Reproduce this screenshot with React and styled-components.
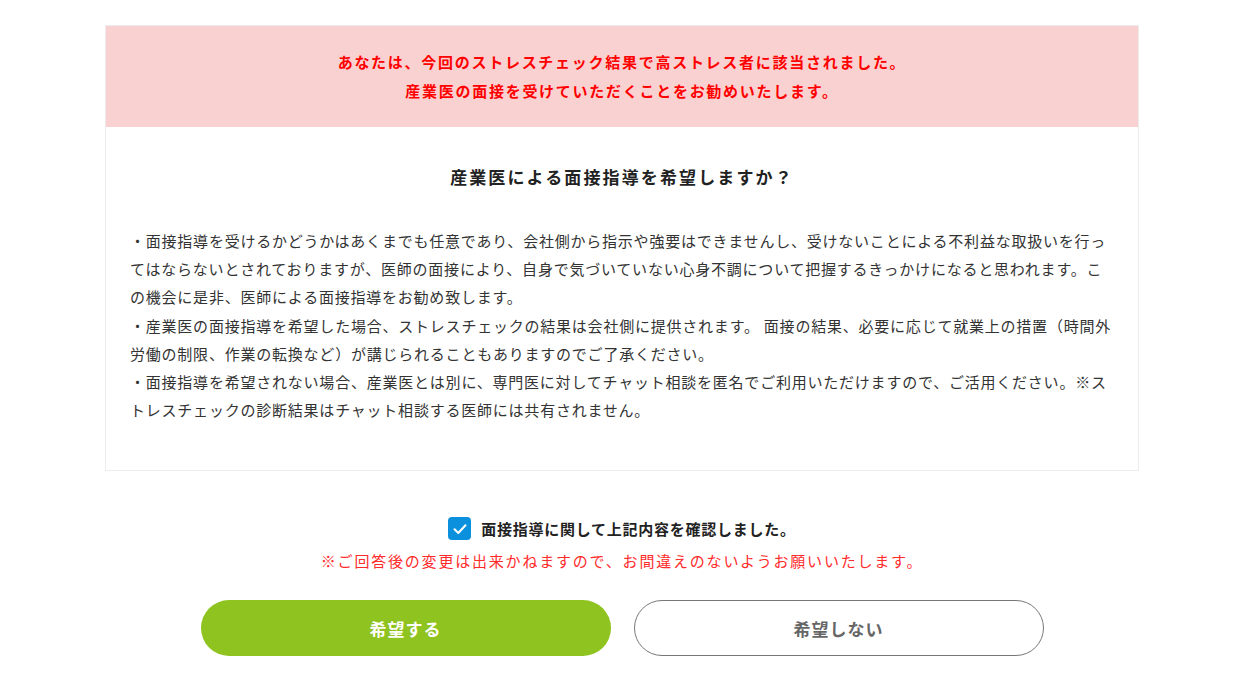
import React, { useState } from "react";
import styled, { createGlobalStyle } from "styled-components";

const Global = createGlobalStyle`
  html, body { margin: 0; padding: 0; background: #fff; }
  body {
    font-family: "Noto Sans CJK JP", "Noto Sans", sans-serif;
    color: #333;
  }
`;

const Page = styled.div`
  padding: 25px 7px 40px 0;
  display: flex;
  flex-direction: column;
  align-items: center;
`;

const Card = styled.section`
  width: 1034px;
  box-sizing: border-box;
  border: 1px solid #ececec;
  background: #fff;
`;

const Alert = styled.div`
  background: #f9d1d1;
  color: #ff0000;
  font-size: 15px;
  font-weight: 700;
  letter-spacing: 0.115em;
  line-height: 29px;
  text-align: center;
  padding: 21px 20px 22px;
`;

const Body = styled.div`
  padding: 36px 24px 46px;
`;

const Title = styled.h2`
  margin: 0 0 37px;
  font-size: 17px;
  font-weight: 700;
  letter-spacing: 0.125em;
  line-height: 27px;
  color: #222;
  text-align: center;
`;

const Notes = styled.div`
  font-size: 15px;
  letter-spacing: 0.052em;
  line-height: 28.2px;
  color: #333;
`;

const Note = styled.p`
  margin: 0;
`;

const Confirm = styled.label`
  margin-top: 46px;
  display: flex;
  align-items: center;
  gap: 10px;
  cursor: pointer;
  font-size: 15px;
  font-weight: 700;
  letter-spacing: 0.05em;
  color: #222;
  line-height: 23px;
`;

const Box = styled.span`
  width: 23px;
  height: 23px;
  border-radius: 4px;
  background: ${(p) => (p.$checked ? "#0a90dc" : "#fff")};
  border: ${(p) => (p.$checked ? "none" : "1px solid #999")};
  box-sizing: border-box;
  display: inline-flex;
  align-items: center;
  justify-content: center;
  flex: none;
`;

const Warning = styled.p`
  margin: 9px 0 0;
  font-size: 15px;
  letter-spacing: 0.12em;
  line-height: 24px;
  color: #ff2b2b;
`;

const Buttons = styled.div`
  margin-top: 27px;
  display: flex;
  gap: 23px;
`;

const Button = styled.button`
  width: 410px;
  height: 56px;
  border-radius: 28px;
  box-sizing: border-box;
  font-family: inherit;
  font-size: 17px;
  font-weight: 700;
  letter-spacing: 0.06em;
  cursor: pointer;
  background: ${(p) => (p.$primary ? "#8fc31f" : "#fff")};
  color: ${(p) => (p.$primary ? "#fff" : "#666")};
  border: ${(p) => (p.$primary ? "none" : "1px solid #777")};
`;

export default function App() {
  const [checked, setChecked] = useState(true);
  return (
    <>
      <Global />
      <Page>
        <Card>
          <Alert>
            あなたは、今回のストレスチェック結果で高ストレス者に該当されました。
            <br />
            産業医の面接を受けていただくことをお勧めいたします。
          </Alert>
          <Body>
            <Title>産業医による面接指導を希望しますか？</Title>
            <Notes>
              <Note>
                ・面接指導を受けるかどうかはあくまでも任意であり、会社側から指示や強要はできませんし、受けないことによる不利益な取扱いを行ってはならないとされておりますが、医師の面接により、自身で気づいていない心身不調について把握するきっかけになると思われます。この機会に是非、医師による面接指導をお勧め致します。
              </Note>
              <Note>
                ・産業医の面接指導を希望した場合、ストレスチェックの結果は会社側に提供されます。 面接の結果、必要に応じて就業上の措置（時間外労働の制限、作業の転換など）が講じられることもありますのでご了承ください。
              </Note>
              <Note>
                ・面接指導を希望されない場合、産業医とは別に、専門医に対してチャット相談を匿名でご利用いただけますので、ご活用ください。※ストレスチェックの診断結果はチャット相談する医師には共有されません。
              </Note>
            </Notes>
          </Body>
        </Card>
        <Confirm onClick={() => setChecked(!checked)}>
          <Box $checked={checked}>
            {checked && (
              <svg width="16" height="16" viewBox="0 0 16 16" fill="none">
                <path d="M2.5 8.3 L6.3 12 L13.5 4.2" stroke="#fff" strokeWidth="2" strokeLinecap="round" strokeLinejoin="round" />
              </svg>
            )}
          </Box>
          面接指導に関して上記内容を確認しました。
        </Confirm>
        <Warning>※ご回答後の変更は出来かねますので、お間違えのないようお願いいたします。</Warning>
        <Buttons>
          <Button $primary>希望する</Button>
          <Button>希望しない</Button>
        </Buttons>
      </Page>
    </>
  );
}
